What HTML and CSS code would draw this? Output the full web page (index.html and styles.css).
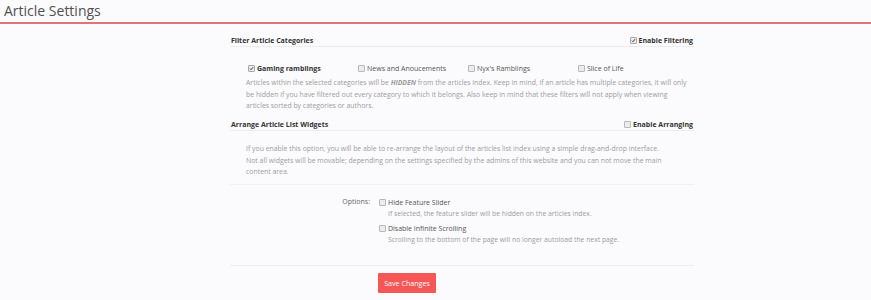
FILE: index.html
```html
<!DOCTYPE html>
<html lang="en">
<head>
  <meta charset="UTF-8">
  <meta name="viewport" content="width=device-width, initial-scale=1.0">
  <title>Article Settings</title>
  <link rel="stylesheet" href="styles.css">
</head>
<body>
  <h1 class="page-title">Article Settings</h1>

  <form class="settings">
    <div class="section-head">
      <span>Filter Article Categories</span>
      <label class="toggle"><span class="box checked"><svg viewBox="0 0 8 8"><path d="M1.5 4.2 L3.2 6 L6.6 1.8" /></svg></span>Enable Filtering</label>
    </div>

    <div class="categories">
      <label class="cat active"><span class="box checked"><svg viewBox="0 0 8 8"><path d="M1.5 4.2 L3.2 6 L6.6 1.8" /></svg></span>Gaming ramblings</label>
      <label class="cat"><span class="box"></span>News and Anoucements</label>
      <label class="cat"><span class="box"></span>Nyx's Ramblings</label>
      <label class="cat"><span class="box"></span>Slice of Life</label>
    </div>
    <p class="hint">Articles within the selected categories will be <b><i>HIDDEN</i></b> from the articles index. Keep in mind, if an article has multiple categories, it will only be hidden if you have filtered out every category to which it belongs. Also keep in mind that these filters will not apply when viewing articles sorted by categories or authors.</p>

    <div class="section-head">
      <span>Arrange Article List Widgets</span>
      <label class="toggle"><span class="box"></span>Enable Arranging</label>
    </div>
    <div class="arrange">
      <p class="hint">If you enable this option, you will be able to re-arrange the layout of the articles list index using a simple drag-and-drop interface. Not all widgets will be movable; depending on the settings specified by the admins of this website and you can not move the main content area.</p>
    </div>

    <div class="options">
      <div class="options-label">Options:</div>
      <div class="options-list">
        <label class="option"><span class="box"></span>Hide Feature Slider</label>
        <div class="option-note">If selected, the feature slider will be hidden on the articles index.</div>
        <label class="option"><span class="box"></span>Disable Infinite Scrolling</label>
        <div class="option-note">Scrolling to the bottom of the page will no longer autoload the next page.</div>
      </div>
    </div>

    <div class="submit-row">
      <button type="submit" class="save">Save Changes</button>
    </div>
  </form>
</body>
</html>
```

FILE: styles.css
```css
body {
  font-family: "Open Sans", "DejaVu Sans", sans-serif;
  margin: 0;
  background: #fbfbfd;
  color: #333;
}

.page-title {
  margin: 0;
  padding: 0 0 0 4px;
  height: 22px;
  font-size: 14px;
  line-height: 22px;
  font-weight: 400;
  color: #505050;
  border-bottom: 2px solid #e07474;
}

.settings {
  width: 464px;
  margin: 0 0 0 230px;
  padding-top: 10px;
}

.section-head {
  display: flex;
  justify-content: space-between;
  align-items: center;
  height: 12px;
  padding: 0 1px;
  border-bottom: 1px solid #ececef;
  font-size: 7px;
  font-weight: 700;
  color: #333;
}

.toggle {
  display: flex;
  align-items: center;
}

.box {
  display: inline-block;
  box-sizing: border-box;
  width: 7px;
  height: 7px;
  margin-right: 2px;
  border: 1px solid #b8b8bc;
  border-radius: 1px;
  background: #ececef;
}
.box svg {
  display: block;
  width: 100%;
  height: 100%;
}
.box svg path {
  fill: none;
  stroke: #444;
  stroke-width: 1.6;
}
.box.checked {
  border-color: #a8a8ac;
}

.categories {
  display: grid;
  grid-template-columns: repeat(4, 110px);
  padding: 15px 0 0 18px;
  height: 12px;
}
.cat {
  display: flex;
  align-items: center;
  font-size: 7px;
  color: #555;
}
.cat.active {
  font-weight: 700;
  color: #333;
}

.hint {
  margin: 3px 4px 6.5px 16px;
  font-size: 6.9px;
  line-height: 11.5px;
  color: #9c9ca0;
}

.arrange {
  padding: 12.4px 0 7px;
  border-bottom: 1px solid #f0f0f2;
}
.arrange .hint {
  margin: 0 26px 0 16px;
  line-height: 11.25px;
}

.options {
  display: flex;
  padding-top: 11px;
}
.options-label {
  width: 140px;
  text-align: right;
  padding-right: 9px;
  font-size: 7px;
  line-height: 12px;
  color: #666;
}
.options-list {
  display: flex;
  flex-direction: column;
}
.option {
  display: flex;
  align-items: center;
  height: 12px;
  font-size: 7px;
  color: #555;
}
.option-note {
  padding-left: 9px;
  height: 14px;
  line-height: 12px;
  font-size: 6.8px;
  color: #9c9ca0;
}

.submit-row {
  margin-top: 17px;
  border-top: 1px solid #eeeef0;
  padding: 3px 0 0 148px;
}
.save {
  width: 58px;
  height: 20px;
  padding: 0;
  border: none;
  border-radius: 1px;
  background: #f65656;
  color: #fff;
  font-family: inherit;
  font-size: 7.1px;
  cursor: pointer;
}
```
